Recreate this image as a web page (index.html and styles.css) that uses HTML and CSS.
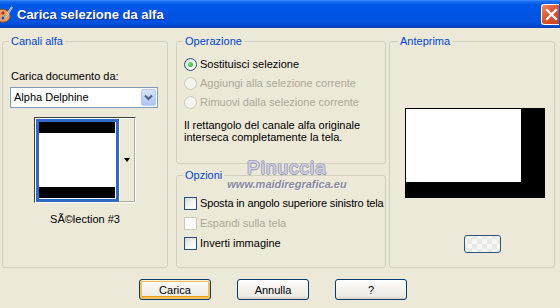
FILE: index.html
```html
<!DOCTYPE html>
<html>
<head>
<meta charset="utf-8">
<link rel="stylesheet" href="styles.css">
</head>
<body>
<div class="titlebar">
  <svg class="title-icon" width="13" height="18" viewBox="0 0 13 18">
    <path d="M-2 4 C3 2 9 4 10 9 C11 14 6 17 1 16 C-2 15 -2 10 -2 4Z" fill="#E8A060" stroke="#8A4A20" stroke-width="1"/>
    <circle cx="3" cy="7" r="1.6" fill="#D02020"/>
    <circle cx="6" cy="10" r="1.6" fill="#20A030"/>
    <circle cx="3" cy="12" r="1.5" fill="#2050D0"/>
    <path d="M12 1 L5 12" stroke="#F4F0E0" stroke-width="2"/>
    <path d="M12 1 L5 12" stroke="#6A5030" stroke-width="0.6"/>
  </svg>
  <span class="title-text">Carica selezione da alfa</span>
  <span class="close">
    <svg width="13" height="13" viewBox="0 0 13 13"><path d="M2 2 L11 11 M11 2 L2 11" stroke="#fff" stroke-width="2.2" stroke-linecap="square"/></svg>
  </span>
</div>

<div class="main">
  <fieldset class="group col1">
    <legend>Canali alfa</legend>
    <div class="field-label">Carica documento da:</div>
    <div class="select">
      <span class="select-text">Alpha Delphine</span>
      <span class="select-btn">
        <svg width="9" height="7" viewBox="0 0 9 7"><path d="M1 1.5 L4.5 5 L8 1.5" fill="none" stroke="#4D6185" stroke-width="2"/></svg>
      </span>
    </div>
    <div class="thumb-frame">
      <div class="thumb-sel">
        <div class="thumb">
          <div class="band"></div>
          <div class="thumb-white"></div>
          <div class="band"></div>
        </div>
      </div>
      <div class="thumb-btn"><span class="tri"></span></div>
    </div>
    <div class="caption">SÃ©lection #3</div>
  </fieldset>

  <div class="col2">
    <fieldset class="group op">
      <legend>Operazione</legend>
      <div class="rows">
        <div class="row"><span class="radio on"><span class="dot"></span></span><span>Sostituisci selezione</span></div>
        <div class="row disabled"><span class="radio off"></span><span>Aggiungi alla selezione corrente</span></div>
        <div class="row disabled"><span class="radio off"></span><span>Rimuovi dalla selezione corrente</span></div>
      </div>
      <p class="note">Il rettangolo del canale alfa originale<br>interseca completamente la tela.</p>
    </fieldset>
    <fieldset class="group opt">
      <legend>Opzioni</legend>
      <div class="checks">
        <div class="crow"><span class="check"></span><span class="tight">Sposta in angolo superiore sinistro tela</span></div>
        <div class="crow disabled"><span class="check off"></span><span>Espandi sulla tela</span></div>
        <div class="crow"><span class="check"></span><span>Inverti immagine</span></div>
      </div>
    </fieldset>
  </div>

  <fieldset class="group col3">
    <legend>Anteprima</legend>
    <div class="preview"><div class="preview-white"></div></div>
    <div class="mini-btn"></div>
  </fieldset>
</div>

<div class="buttons">
  <button class="btn default">Carica</button>
  <button class="btn">Annulla</button>
  <button class="btn">?</button>
</div>

<div class="watermark">
  <div class="wm-name">Pinuccia</div>
  <div class="wm-url">www.maidiregrafica.eu</div>
</div>
</body>
</html>
```

FILE: styles.css
```css
* { box-sizing: border-box; }

body {
  margin: 0;
  width: 560px;
  height: 308px;
  overflow: hidden;
  position: relative;
  background: #ECE9D8;
  font-family: "Liberation Sans", Arial, sans-serif;
  font-size: 11px;
  line-height: 13px;
  color: #000;
  white-space: nowrap;
}

.titlebar {
  height: 28px;
  display: flex;
  align-items: center;
  background: linear-gradient(#3C8DF8 0px, #1468EE 2px, #0058E8 5px, #0055E5 40%, #0052E0 80%, #0049D0 93%, #003CB8 100%);
}

.title-icon { display: block; margin-left: 0; margin-top: 1px; }

.title-text {
  margin-left: 4px;
  font-weight: bold;
  font-size: 13px;
  color: #fff;
  text-shadow: 1px 1px 0 #0A2E8C;
}

.close {
  margin-left: auto;
  margin-right: 1px;
  width: 18px;
  height: 21px;
  border: 1px solid #fff;
  border-right: none;
  border-radius: 3px 0 0 3px;
  background: linear-gradient(135deg, #EC8A6A 0%, #E05A38 40%, #C83E1C 100%);
  display: flex;
  align-items: center;
  justify-content: center;
  padding-left: 2px;
}

.main {
  display: flex;
  padding: 7px 0 0 2px;
}

.group {
  margin: 0;
  padding: 0;
  border: 1px solid #D0D0BF;
  border-radius: 3px;
  min-width: 0;
}

.group legend {
  margin-left: 6px;
  padding: 0 2px;
  color: #0046D5;
  line-height: 13px;
}

.col1 { width: 166px; height: 233px; }
.col2 { width: 210px; margin-left: 8px; display: flex; flex-direction: column; }
.col3 { width: 166px; height: 233px; margin-left: 3px; }
.col3 legend { margin-left: 8px; }

/* col1 */
.field-label { margin: 22px 0 0 8px; }

.select {
  margin: 4px 0 0 7px;
  width: 148px;
  height: 21px;
  border: 1px solid #7F9DB9;
  background: #fff;
  display: flex;
  align-items: center;
  padding: 1px;
}
.select-text { flex: 1; padding-left: 2px; }
.select-btn {
  width: 15px;
  height: 17px;
  border: 1px solid #B8CCF7;
  border-radius: 2px;
  background: linear-gradient(#D8E5FD, #BCD0FA 60%, #AEC5F6);
  display: flex;
  align-items: center;
  justify-content: center;
}

.thumb-frame {
  margin: 9px 0 0 31px;
  width: 102px;
  height: 86px;
  border: 1px solid;
  border-color: #404040 #FFFFFF #FFFFFF #404040;
  background: #fff;
  display: flex;
}
.thumb-sel {
  margin: 1px 0 0 1px;
  border: 3px solid #316AC5;
  width: 83px;
  height: 83px;
  padding: 0 1px 0 0;
}
.thumb { width: 76px; height: 76px; display: flex; flex-direction: column; }
.band { height: 11px; background: #000; }
.thumb-white { flex: 1; background: #fff; }
.thumb-btn {
  width: 17px;
  height: 84px;
  background: #ECE9D8;
  border: 1px solid;
  border-color: #FFFFFF #ACA899 #ACA899 #FFFFFF;
  display: flex;
  justify-content: center;
  padding-top: 39px;
}
.tri {
  width: 0; height: 0;
  border-left: 3.5px solid transparent;
  border-right: 3.5px solid transparent;
  border-top: 4px solid #000;
}

.caption {
  margin: 10px 0 0 31px;
  width: 102px;
  text-align: center;
}

/* col2 */
.op { height: 129px; }
.rows { padding: 7px 0 0 7px; }
.row, .crow { display: flex; align-items: center; gap: 3px; }
.row { height: 19px; }
.crow { height: 20px; }
.disabled { color: #ACA899; }
.tight { letter-spacing: -0.15px; }

.radio {
  width: 13px;
  height: 13px;
  border-radius: 50%;
  border: 1px solid #1C5180;
  background: linear-gradient(135deg, #DCDCD7, #FFFFFF 80%);
  display: flex;
  align-items: center;
  justify-content: center;
}
.radio.off { border-color: #CAC8BB; background: #F4F3EE; }
.dot {
  width: 5px; height: 5px; border-radius: 50%;
  background: radial-gradient(circle at 35% 35%, #7CE37A, #21A121);
}

.note { margin: 7px 0 0 7px; line-height: 12.3px; }

.opt { height: 99px; margin-top: 5px; }
.checks { padding: 11px 0 0 7px; }
.check {
  width: 13px; height: 13px;
  flex: none;
  border: 1px solid #1C5180;
  background: linear-gradient(135deg, #DCDCD7, #FFFFFF 85%);
}
.check.off { border-color: #CAC8BB; background: #FFFFFF; }

/* col3 */
.preview {
  margin: 60px 0 0 15px;
  width: 140px;
  height: 90px;
  background: #000;
  padding: 1px 0 0 1px;
}
.preview-white { width: 115px; height: 73px; background: #fff; }
.mini-btn {
  margin: 37px 0 0 74px;
  width: 37px;
  height: 18px;
  border: 1px solid #2F5580;
  border-radius: 3px;
  background:
    repeating-conic-gradient(#F7F7F4 0 25%, #E9E9E4 0 50%) 12px 3px / 10px 10px,
    #F4F4F0;
}

/* buttons */
.buttons {
  display: flex;
  gap: 26px;
  padding: 11px 0 0 139px;
}
.btn {
  width: 72px;
  height: 21px;
  border: 1px solid #003C74;
  border-radius: 3px;
  background: linear-gradient(#FFFFFF, #F4F3EE 40%, #ECEBE6 85%, #D6D0C5);
  font-family: "Liberation Sans", Arial, sans-serif;
  font-size: 11px;
  color: #000;
  padding: 0;
}
.btn.default {
  box-shadow: inset 0 1px 0 #FFF0CF, inset 0 0 0 2px #F6BE5A, inset 0 -1px 0 2px #E5A01A;
}

/* watermark overlay */
.watermark {
  position: absolute;
  left: 220px;
  top: 157px;
  width: 134px;
  text-align: center;
  pointer-events: none;
}
.wm-name {
  font-size: 19px;
  line-height: 21px;
  letter-spacing: 1px;
  color: #D2D2E2;
  text-shadow: -1px 0 0 #A0A0B8, 1px 0 0 #A0A0B8, 0 -1px 0 #A8A8BE, 0 1px 0 #9090AA;
}
.wm-url {
  font-size: 11px;
  line-height: 13px;
  font-weight: bold;
  font-style: italic;
  color: #8A8A9C;
  text-shadow: 1px 1px 0 #F4F4F8;
}
```
